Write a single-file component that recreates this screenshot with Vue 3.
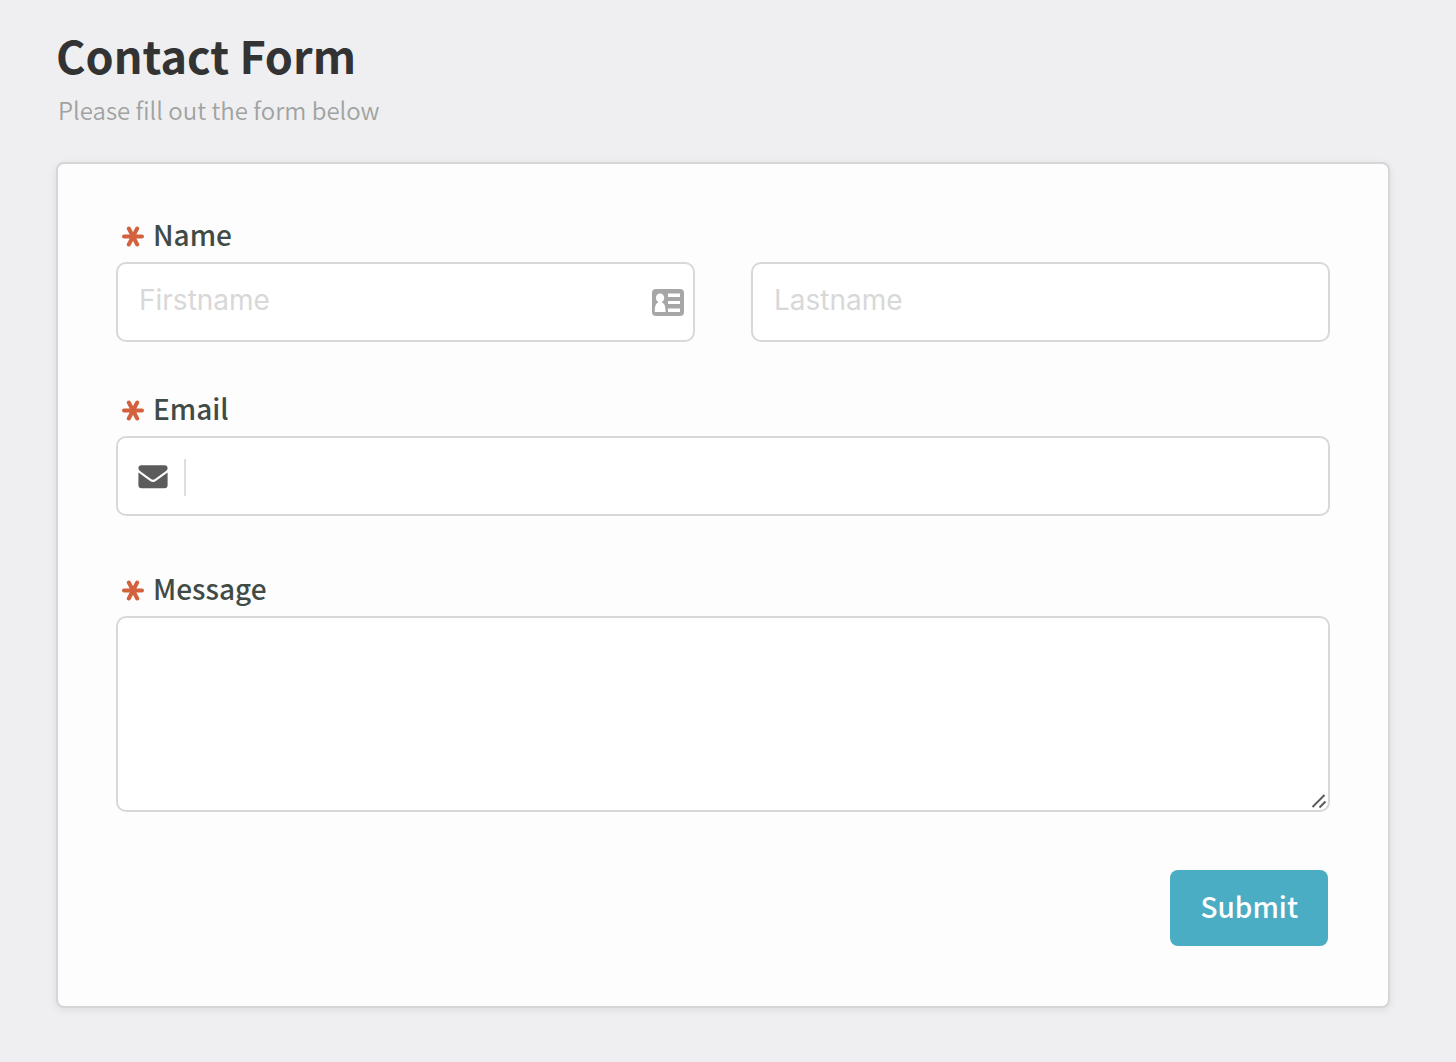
<script setup>
import { reactive } from 'vue'

const form = reactive({ firstname: '', lastname: '', email: '', message: '' })
</script>

<template>
  <main class="page">
    <header class="intro">
      <h1>Contact Form</h1>
      <p>Please fill out the form below</p>
    </header>

    <form class="card" @submit.prevent>
      <section class="group">
        <label class="label" for="firstname">
          <svg class="star" viewBox="0 0 22 22" aria-hidden="true"><path d="M2 11.500H20M6.800 3.500L15.200 19.500M15.200 3.500L6.800 19.500" /></svg>
          <span>Name</span>
        </label>
        <div class="row">
          <div class="field">
            <input id="firstname" v-model="form.firstname" class="control" type="text" placeholder="Firstname" />
            <svg class="contact" viewBox="0 0 32 27" aria-hidden="true">
              <rect width="32" height="27" rx="4" fill="#a6a6a6" />
              <path fill="#fff" d="M8 4.500C5.600 4.500 4 6.300 4 8.700C4 10.700 4.800 12.200 6.200 13V13.600C3.800 14.400 2.800 17 2.800 23H13.600C13.600 17 12.400 14.400 10 13.600V13C11.300 12.200 12.200 10.700 12.200 8.700C12.200 6.300 10.400 4.500 8 4.500Z" />
              <path fill="#fff" d="M16 4.500H28V8H16ZM16 12H28V15H16ZM16 19.500H28V23H16Z" />
            </svg>
          </div>
          <div class="field">
            <input v-model="form.lastname" class="control" type="text" placeholder="Lastname" aria-label="Lastname" />
          </div>
        </div>
      </section>

      <section class="group email">
        <label class="label" for="email">
          <svg class="star" viewBox="0 0 22 22" aria-hidden="true"><path d="M2 11.500H20M6.800 3.500L15.200 19.500M15.200 3.500L6.800 19.500" /></svg>
          <span>Email</span>
        </label>
        <div class="control with-icon">
          <svg class="envelope" viewBox="0 0 30 25" aria-hidden="true">
            <path d="M3.500 0.300H26.500Q29.600 0.300 29.600 3.300Q29.600 5 28 6L17 14Q15 15.600 13 14L2 6Q0.400 5 0.400 3.300Q0.400 0.300 3.500 0.300Z" />
            <path d="M0.400 7.500L11.800 15.800Q15 18.300 18.200 15.800L29.600 7.500V20Q29.600 23.200 26.500 23.200H3.500Q0.400 23.200 0.400 20Z" />
          </svg>
          <input id="email" v-model="form.email" type="email" />
        </div>
      </section>

      <section class="group">
        <label class="label" for="message">
          <svg class="star" viewBox="0 0 22 22" aria-hidden="true"><path d="M2 11.500H20M6.800 3.500L15.200 19.500M15.200 3.500L6.800 19.500" /></svg>
          <span>Message</span>
        </label>
        <div class="field">
          <textarea id="message" v-model="form.message" class="control message"></textarea>
          <svg class="grip" viewBox="0 0 16 16" aria-hidden="true"><path d="M1.500 14L13.500 2M8.500 14.500L14.500 8.500" /></svg>
        </div>
      </section>

      <div class="actions">
        <button type="submit">Submit</button>
      </div>
    </form>
  </main>
</template>

<style>
body {
  background: #efeff1;
}
</style>

<style scoped>
.page {
  padding: 30px 66px 54px 56px;
  font-family: "Noto Sans CJK SC", "Noto Sans", sans-serif;
}

h1 {
  margin: 0;
  color: #333;
  font-size: 45px;
  font-weight: 700;
  line-height: 50px;
}

.intro {
  margin-bottom: 34px;
}

.intro p {
  margin: 12px 0 0;
  padding-left: 2px;
  color: #9fa3a1;
  font-size: 24px;
  font-weight: 350;
  line-height: 36px;
}

.card {
  padding: 50px 58px 60px;
  border: 2px solid #d6d6d8;
  border-radius: 8px;
  background: #fdfdfd;
  box-shadow: 0 2px 8px rgba(0, 0, 0, 0.08);
}

.group {
  margin-bottom: 46px;
}

.group.email {
  margin-bottom: 52px;
}

.label {
  display: flex;
  align-items: center;
  gap: 9px;
  height: 44px;
  margin-bottom: 4px;
  padding-left: 6px;
  color: #414b46;
  font-size: 28px;
  font-weight: 500;
}

.label span {
  padding-bottom: 4px;
}

.star {
  width: 22px;
  height: 22px;
  fill: none;
  stroke: #d4613d;
  stroke-width: 4;
  stroke-linecap: round;
}

.row {
  display: flex;
  gap: 56px;
}

.field {
  position: relative;
  flex: 1;
}

.control {
  display: block;
  box-sizing: border-box;
  width: 100%;
  height: 80px;
  padding: 0 21px 4px;
  border: 2px solid #d8d8d8;
  border-radius: 10px;
  outline: none;
  background: #fff;
  color: #333;
  font-family: Inter, sans-serif;
  font-size: 28px;
}

.control::placeholder {
  color: #d8d8d8;
  opacity: 1;
}

.contact {
  position: absolute;
  top: 27px;
  right: 11px;
  width: 32px;
  height: 27px;
}

.with-icon {
  display: flex;
  align-items: center;
  gap: 16px;
  padding: 3px 20px 0;
}

.envelope {
  width: 30px;
  height: 25px;
  fill: #5c5c5c;
}

.with-icon input {
  flex: 1;
  min-width: 0;
  height: 37px;
  padding: 0 16px;
  border: 0;
  border-left: 2px solid #dedede;
  outline: none;
  background: transparent;
  font: inherit;
}

.message {
  height: 196px;
  padding: 16px 21px;
  resize: none;
}

.grip {
  position: absolute;
  right: 3px;
  bottom: 3px;
  width: 16px;
  height: 16px;
  fill: none;
  stroke: #5c5c5c;
  stroke-width: 2;
  pointer-events: none;
}

.actions {
  display: flex;
  justify-content: flex-end;
  margin-top: 58px;
  padding-right: 2px;
}

button {
  height: 76px;
  padding: 0 30px 4px;
  border: 0;
  border-radius: 8px;
  background: #4badc3;
  color: #fff;
  font-family: inherit;
  font-size: 28px;
  font-weight: 500;
}
</style>
